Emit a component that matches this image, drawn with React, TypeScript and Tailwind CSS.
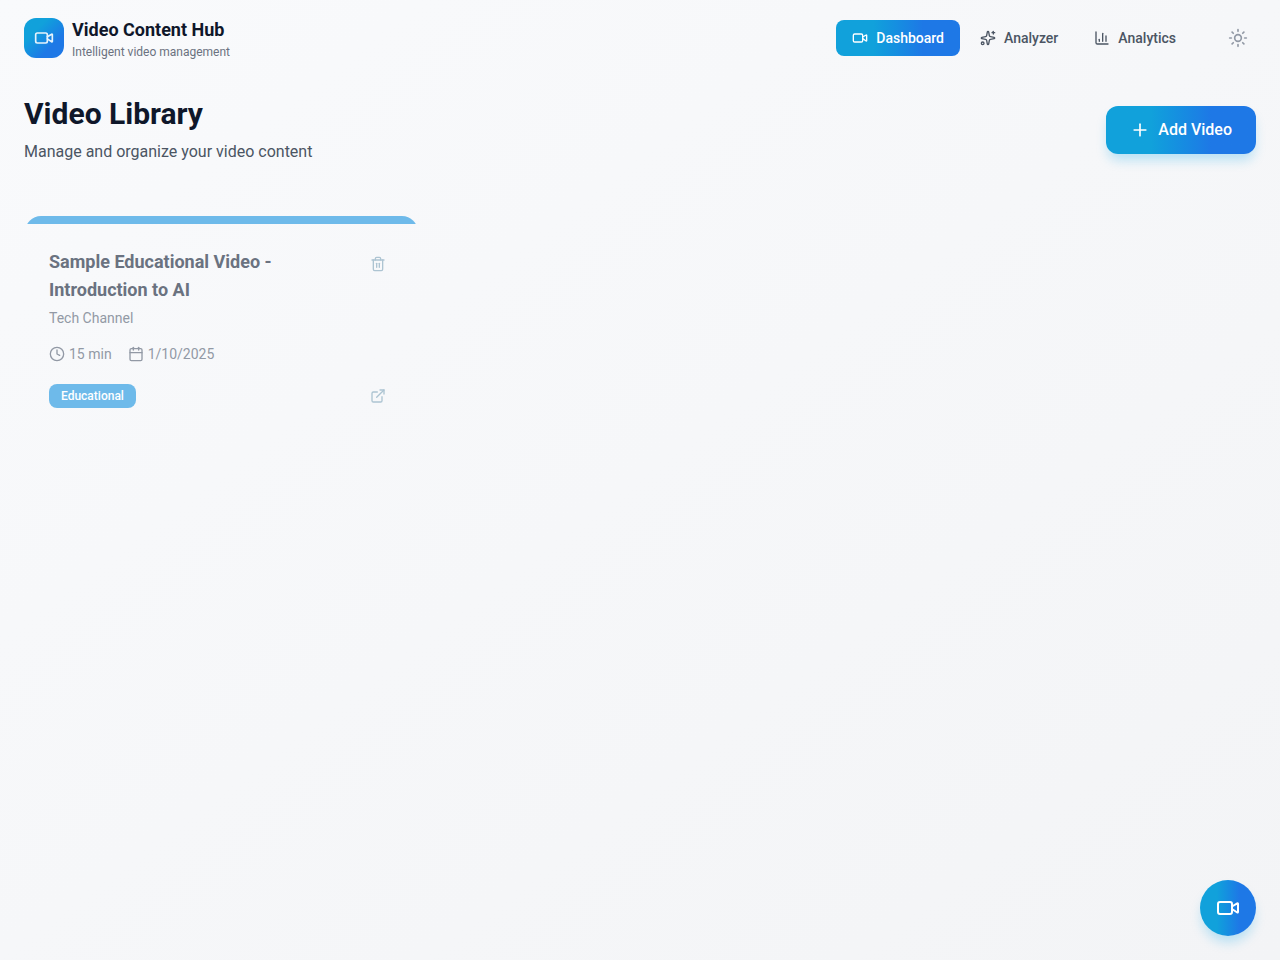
import type { ComponentType } from "react";
import {
  Calendar,
  ChartColumn,
  Clock,
  ExternalLink,
  Plus,
  Sparkles,
  Sun,
  Trash2,
  Video,
} from "lucide-react";

type IconType = ComponentType<{ className?: string }>;

function NavButton({ icon: Icon, label, active = false }: { icon: IconType; label: string; active?: boolean }) {
  return (
    <button
      type="button"
      aria-current={active ? "page" : undefined}
      className={
        active
          ? "flex h-9 items-center gap-2 rounded-lg bg-linear-to-r from-[#11a1db] from-30% to-[#1e78e6] to-70% px-4 text-sm font-medium text-white"
          : "flex h-9 items-center gap-2 rounded-lg px-4 text-sm font-medium text-[#4b5563]"
      }
    >
      <Icon className="size-4" />
      {label}
    </button>
  );
}

function Header() {
  return (
    <header className="flex items-center justify-between px-6 py-4">
      <div className="flex items-center gap-2">
        <div className="flex size-10 items-center justify-center rounded-xl bg-linear-to-br from-[#11a1db] from-30% to-[#1e78e6] to-70%">
          <Video className="size-5 text-[#e6f3fc]" />
        </div>
        <div>
          <p className="text-lg leading-7 font-bold text-[#0f172a]">Video Content Hub</p>
          <p className="text-xs text-[#6b7280]">Intelligent video management</p>
        </div>
      </div>
      <div className="flex items-center gap-7">
        <nav className="flex items-center gap-1">
          <NavButton icon={Video} label="Dashboard" active />
          <NavButton icon={Sparkles} label="Analyzer" />
          <NavButton icon={ChartColumn} label="Analytics" />
        </nav>
        <button type="button" aria-label="Toggle theme" className="flex size-9 items-center justify-center rounded-lg text-[#9299a5]">
          <Sun className="size-5" />
        </button>
      </div>
    </header>
  );
}

function VideoCard() {
  return (
    <article className="mx-px overflow-hidden rounded-2xl">
      <div className="h-2 bg-[#6ebaea]" />
      <div className="p-6">
        <div className="flex items-start justify-between">
          <div className="max-w-64">
            <h2 className="text-lg leading-7 font-bold text-[#6a7280]">Sample Educational Video - Introduction to AI</h2>
            <p className="mt-1 text-sm text-[#9299a5]">Tech Channel</p>
          </div>
          <button type="button" aria-label="Delete video" className="flex size-8 items-center justify-center text-[#adc4d2]">
            <Trash2 className="size-4" />
          </button>
        </div>
        <div className="mt-4 flex items-center gap-4 text-sm text-[#9299a5]">
          <span className="flex items-center gap-1">
            <Clock className="size-4" />
            15 min
          </span>
          <span className="flex items-center gap-1">
            <Calendar className="size-4" />
            1/10/2025
          </span>
        </div>
        <div className="mt-4 flex items-center justify-between">
          <span className="rounded-lg bg-[#6ebaea] px-3 py-1 text-xs font-medium text-white">Educational</span>
          <a href="#video" aria-label="Open video" className="flex size-8 items-center justify-center text-[#adc4d2]">
            <ExternalLink className="size-4" />
          </a>
        </div>
      </div>
    </article>
  );
}

export default function App() {
  return (
    <div className="min-h-screen bg-linear-to-br from-[#f9fafc] to-[#f3f4f6] font-[Roboto,sans-serif]">
      <Header />
      <main className="px-6 pt-5">
        <div className="flex items-center justify-between">
          <div>
            <h1 className="text-3xl leading-9 font-bold text-[#0f172a]">Video Library</h1>
            <p className="mt-2 text-base text-[#4b5563]">Manage and organize your video content</p>
          </div>
          <button
            type="button"
            className="flex h-12 items-center gap-2 rounded-xl bg-linear-to-r from-[#11a1db] from-30% to-[#1e78e6] to-70% px-6 text-base font-medium text-white shadow-[0_8px_12px_-2px_#0ea5e945]"
          >
            <Plus className="size-5" />
            Add Video
          </button>
        </div>
        <div className="mt-13 grid grid-cols-3 gap-6">
          <VideoCard />
        </div>
      </main>
      <button
        type="button"
        aria-label="Record video"
        className="fixed right-6 bottom-6 flex size-14 items-center justify-center rounded-full bg-linear-to-r from-[#11a1db] from-30% to-[#1e78e6] to-70% text-white shadow-[0_8px_12px_-2px_#0ea5e945]"
      >
        <Video className="size-6" />
      </button>
    </div>
  );
}
